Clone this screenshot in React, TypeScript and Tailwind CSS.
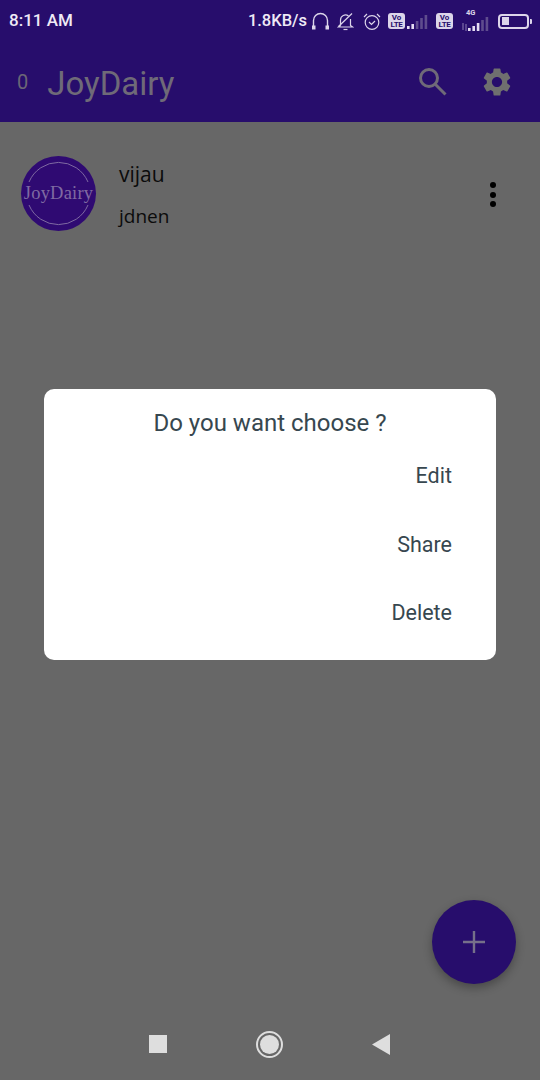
const ROBOTO = "font-['Roboto',sans-serif]";

function SignalBars({ active }: { active: number }) {
  const bars = [3, 5, 8, 11, 14];
  return (
    <svg width="22" height="15" viewBox="0 0 22 15">
      {bars.map((h, i) => (
        <rect key={h} x={i * 4.4} y={15 - h} width="2.6" height={h} fill={i < active ? '#e4dcf2' : '#5f4c8e'} />
      ))}
    </svg>
  );
}

function VoLte() {
  return (
    <div className="flex h-[16px] w-[17px] flex-col items-center justify-center rounded-[3px] bg-[#dcd5ea] font-['Roboto',sans-serif] text-[8px] font-bold leading-[7.5px] text-[#270d6c]">
      <span>Vo</span>
      <span className="tracking-[-0.3px]">LTE</span>
    </div>
  );
}

function StatusBar() {
  return (
    <div className={`flex h-[42px] items-center justify-between pl-[9px] pr-[8px] text-[#efeaf6] ${ROBOTO}`}>
      <span className="text-[17px] font-medium">8:11 AM</span>
      <div className="flex items-center">
        <span className="text-[16.5px] font-medium">1.8KB/s</span>
        {/* headphones */}
        <svg className="ml-[4px]" width="19" height="20" viewBox="0 0 19 20" fill="none" stroke="#dcd5ea" strokeWidth="1.4">
          <path d="M2.5 15V9.5a7 7 0 0 1 14 0V15" />
          <rect x="1" y="14.5" width="3.5" height="4" fill="#dcd5ea" stroke="none" />
          <rect x="14.5" y="14.5" width="3.5" height="4" fill="#dcd5ea" stroke="none" />
        </svg>
        {/* muted bell */}
        <svg className="ml-[7px]" width="17" height="19" viewBox="0 0 17 19" fill="none" stroke="#dcd5ea" strokeWidth="1.2">
          <path d="M3.5 13.5V8a5 5 0 0 1 8-4M13.5 7v6.5l2 1.5H1.5l2-1.5" />
          <path d="M6.5 17.5h4" />
          <path d="M1.5 14.5 15 1.5" />
        </svg>
        {/* alarm */}
        <svg className="ml-[9px]" width="18" height="19" viewBox="0 0 18 19" fill="none" stroke="#dcd5ea" strokeWidth="1.2">
          <circle cx="9" cy="10.5" r="6.8" />
          <path d="M1 5l3-3M17 5l-3-3" />
          <path d="M6 10l2.5 2.5L12 9" />
        </svg>
        <div className="ml-[7px]">
          <VoLte />
        </div>
        <div className="ml-[2px]">
          <SignalBars active={2} />
        </div>
        <div className="ml-[7px]">
          <VoLte />
        </div>
        <div className="relative ml-[9px] flex items-end pt-[4px]">
          <span className="absolute left-[4px] top-[-5px] font-['Roboto',sans-serif] text-[7.5px] font-bold text-[#dcd5ea]">4G</span>
          {/* data arrows */}
          <svg className="mr-[1px]" width="5" height="8" viewBox="0 0 5 8" stroke="#8f80b4" strokeWidth="1">
            <path d="M1 0v7M4 1v7" />
          </svg>
          <SignalBars active={3} />
        </div>
        {/* battery */}
        <div className="ml-[8px] flex items-center">
          <div className="flex h-[15px] w-[31px] items-center rounded-[4px] border-2 border-[#dcd5ea] px-[2px]">
            <div className="h-[8px] w-[7px] bg-[#dcd5ea]" />
          </div>
          <div className="ml-[1px] h-[5px] w-[2px] rounded-r-[1px] bg-[#dcd5ea]" />
        </div>
      </div>
    </div>
  );
}

function AppBar() {
  return (
    <div className="flex h-[80px] items-center pl-[17px] pr-[27px]">
      <span className={`text-[20px] text-[#6b6676] ${ROBOTO}`}>0</span>
      <span className="ml-[19px] mt-[3px] font-['Roboto',sans-serif] text-[33px] text-[#6f6a78]">JoyDairy</span>
      <div className="ml-auto flex items-center gap-[32px]">
        <svg width="30" height="30" viewBox="0 0 30 30" fill="none" stroke="#6f6a78" strokeWidth="3">
          <circle cx="11" cy="11" r="8.5" />
          <path d="M17.5 17.5l10 10" />
        </svg>
        <svg className="-mr-[1px]" width="34" height="34" viewBox="0 0 24 24" fill="#6f6f6f">
          <path d="M19.14 12.94c.04-.3.06-.61.06-.94 0-.32-.02-.64-.07-.94l2.03-1.58a.49.49 0 0 0 .12-.61l-1.92-3.32a.488.488 0 0 0-.59-.22l-2.39.96c-.5-.38-1.03-.7-1.62-.94l-.36-2.54a.484.484 0 0 0-.48-.41h-3.84c-.24 0-.43.17-.47.41l-.36 2.54c-.59.24-1.13.57-1.62.94l-2.39-.96c-.22-.08-.47 0-.59.22L2.74 8.87c-.12.21-.08.47.12.61l2.03 1.58c-.05.3-.09.63-.09.94s.02.64.07.94l-2.03 1.58a.49.49 0 0 0-.12.61l1.92 3.32c.12.22.37.29.59.22l2.39-.96c.5.38 1.03.7 1.62.94l.36 2.54c.05.24.24.41.48.41h3.84c.24 0 .44-.17.47-.41l.36-2.54c.59-.24 1.13-.56 1.62-.94l2.39.96c.22.08.47 0 .59-.22l1.92-3.32c.12-.22.07-.47-.12-.61l-2.01-1.58zM12 15.6c-1.98 0-3.6-1.62-3.6-3.6s1.62-3.6 3.6-3.6 3.6 1.62 3.6 3.6-1.62 3.6-3.6 3.6z" />
        </svg>
      </div>
    </div>
  );
}

function Logo() {
  return (
    <div className="relative flex h-[75px] w-[75px] items-center justify-center rounded-full bg-[#2f0a72]">
      <svg className="absolute inset-0" width="75" height="75" viewBox="0 0 75 75" fill="none" stroke="#7f6aa2" strokeWidth="1">
        <path d="M8 26A32 32 0 0 1 67 26" />
        <path d="M8 49A32 32 0 0 0 67 49" />
      </svg>
      <span className="font-['Liberation_Serif',serif] text-[18.5px] tracking-[0.2px] text-[#7f6aa2]">JoyDairy</span>
    </div>
  );
}

function DiaryRow() {
  return (
    <div className="flex items-start pl-[21px] pr-[44px] pt-[34px]">
      <Logo />
      <div className="ml-[23px] font-['Open_Sans',sans-serif] text-[#0b0b0b]">
        <div className="mt-[4px] text-[21px] font-medium leading-[28px]">vijau</div>
        <div className="mt-[15px] text-[19px] leading-[26px]">jdnen</div>
      </div>
      {/* overflow dots */}
      <div className="ml-auto mt-[26px] flex flex-col gap-[3.5px]">
        <div className="h-[6px] w-[6px] rounded-full bg-black" />
        <div className="h-[6px] w-[6px] rounded-full bg-black" />
        <div className="h-[6px] w-[6px] rounded-full bg-black" />
      </div>
    </div>
  );
}

function ChooseDialog() {
  return (
    <div className={`absolute left-[44px] top-[389px] h-[271px] w-[452px] rounded-[10px] bg-white pr-[44px] pt-[18px] text-[#37474f] ${ROBOTO}`}>
      <div className="pl-[44px] text-center text-[24px] leading-[32px]">Do you want choose ?</div>
      <div className="mt-[23px] flex flex-col items-end gap-[40.5px] text-[21.5px] leading-[28px]">
        <span>Edit</span>
        <span>Share</span>
        <span>Delete</span>
      </div>
    </div>
  );
}

function NavBar() {
  return (
    <div className="flex h-[56px] items-start justify-center gap-[89px] pr-[2px]">
      <div className="mt-[11px] h-[18px] w-[18px] bg-[#dedede]" />
      <div className="mt-[7px] flex h-[27px] w-[27px] items-center justify-center rounded-full border-2 border-[#dedede]">
        <div className="h-[19px] w-[19px] rounded-full bg-[#dedede]" />
      </div>
      <svg className="mt-[10px]" width="18" height="21" viewBox="0 0 18 21">
        <path d="M18 0v21L0 10.5z" fill="#dedede" />
      </svg>
    </div>
  );
}

export default function App() {
  return (
    <div className="relative flex h-[1080px] w-[540px] flex-col overflow-hidden bg-[#676767]">
      <div className="bg-[#270d6c]">
        <StatusBar />
        <AppBar />
      </div>
      <DiaryRow />
      <div className="flex-1" />
      <NavBar />
      <ChooseDialog />
      {/* FAB */}
      <div className="absolute left-[432px] top-[900px] flex h-[84px] w-[84px] items-center justify-center rounded-full bg-[#270d6c] shadow-[0_4px_10px_rgba(0,0,0,0.3)]">
        <svg width="22" height="22" viewBox="0 0 22 22" stroke="#76708a" strokeWidth="2.4">
          <path d="M11 0v22M0 11h22" />
        </svg>
      </div>
    </div>
  );
}
